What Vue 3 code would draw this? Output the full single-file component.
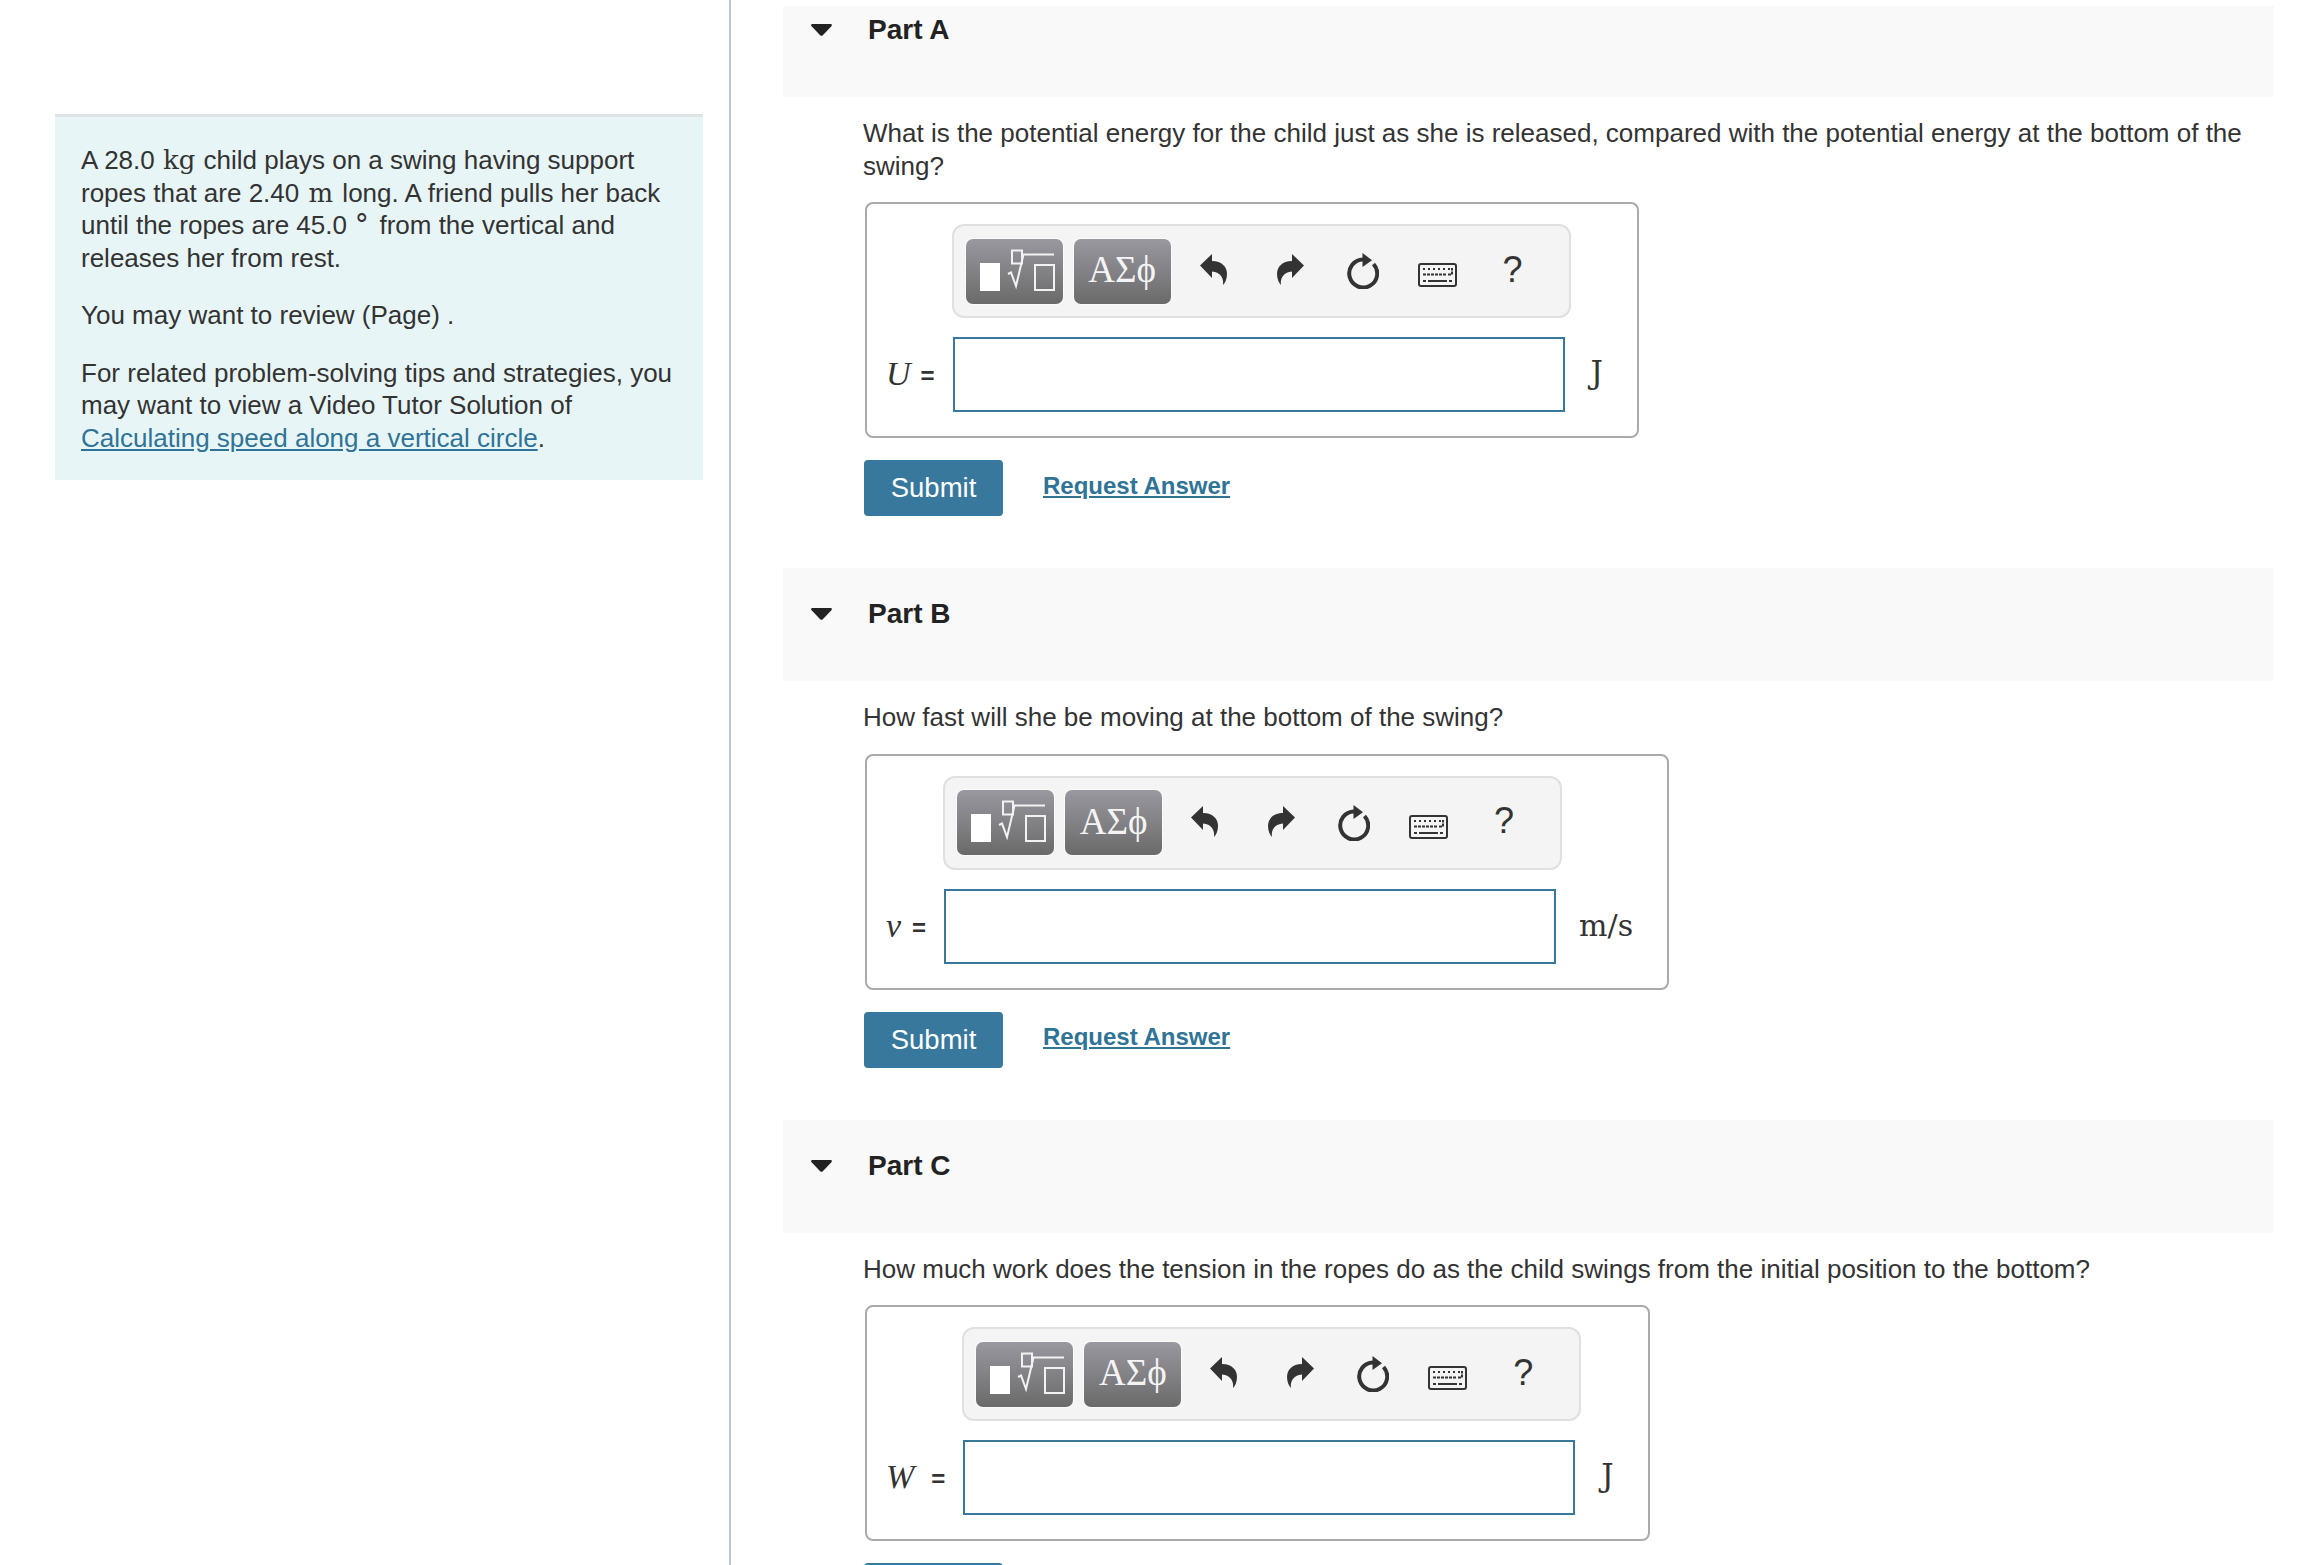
<template>
  <div class="page">
    <aside class="side">
      <div class="intro">
        <p>
          A 28.0 <span class="unit-math">kg</span> child plays on a swing having support
          ropes that are 2.40 <span class="unit-math unit-math--wide">m</span> long. A friend pulls her back
          until the ropes are 45.0 <sup class="deg">∘</sup> from the vertical and
          releases her from rest.
        </p>
        <p>You may want to review (Page) .</p>
        <p>
          For related problem-solving tips and strategies, you may want to view a Video Tutor Solution of
          <a class="link" href="#">Calculating speed along a vertical circle</a>.
        </p>
      </div>
    </aside>

    <main class="main">
      <section v-for="part in parts" :key="part.name" class="part">
        <header class="part-head" :class="{ 'part-head--first': part.name === 'Part A' }">
          <svg class="caret" viewBox="0 0 21 12" width="21" height="12">
            <path d="M1.5 0H19.5C20.8 0 21.3 1.2 20.4 2.2L11.6 11.4C11 12 10 12 9.4 11.4L.6 2.2C-.3 1.2.2 0 1.5 0Z" fill="#222" />
          </svg>
          <h2 class="part-title">{{ part.name }}</h2>
        </header>

        <p class="question">{{ part.question }}</p>

        <div class="answer-box">
          <div class="toolbar">
            <button class="tool-btn" type="button">
              <svg viewBox="0 0 97 65" width="97" height="65">
                <rect x="14" y="24" width="20" height="28" fill="#fff" />
                <rect x="46" y="11.5" width="10" height="13" fill="none" stroke="#f2f2f2" stroke-width="2" />
                <path d="M42 35L45 33.5L50 47L57.5 15.5H88" fill="none" stroke="#f2f2f2" stroke-width="2" />
                <rect x="69" y="26" width="19" height="25" fill="none" stroke="#f2f2f2" stroke-width="2" />
              </svg>
            </button>
            <button class="tool-btn tool-btn--greek" type="button">ΑΣϕ</button>

            <svg class="icon icon--undo" viewBox="0 0 27 31" width="27" height="31">
              <path d="M0 11.5L12 0V7C22 7 27 13 27 20C27 25 25 29 23 31C24 25 21 18 12 17.5V24Z" fill="#333" />
            </svg>
            <svg class="icon icon--redo" viewBox="0 0 27 31" width="27" height="31">
              <path d="M27 11.5L15 0V7C5 7 0 13 0 20C0 25 2 29 4 31C3 25 6 18 15 17.5V24Z" fill="#333" />
            </svg>
            <svg class="icon icon--reset" viewBox="0 0 32 36" width="32" height="36">
              <path d="M16 6.5A14 14 0 1 0 26.5 11" fill="none" stroke="#333" stroke-width="4" />
              <path d="M15.5 0L25 7.3L15.5 14Z" fill="#333" />
            </svg>
            <svg class="icon icon--keys" viewBox="0 0 39 24" width="39" height="24">
              <rect x="1" y="1" width="37" height="22" rx="2" fill="#f4f4f4" stroke="#333" stroke-width="2" />
              <path d="M5 6H8M10 6H13M15 6H18M20 6H23M25 6H28M30 6H32" stroke="#333" stroke-width="2" stroke-dasharray="2 1" />
              <path d="M5 11.5H28M30 11.5H34V5" fill="none" stroke="#333" stroke-width="2" stroke-dasharray="3 1" />
              <path d="M5 18H8M10 18H29M31 18H34" stroke="#333" stroke-width="2" />
            </svg>
            <span class="help">?</span>
          </div>

          <label class="var-label" :style="{ gap: part.labelGap + 'px' }"><i class="var-name">{{ part.variable }}</i><span class="equals">=</span></label>
          <input class="answer-input" type="text" />
          <span class="answer-unit" :class="{ 'answer-unit--joule': part.unit === 'J' }">{{ part.unit }}</span>
        </div>

        <div class="actions">
          <button class="submit" type="button">Submit</button>
          <a class="request" href="#">Request Answer</a>
        </div>
      </section>
    </main>
  </div>
</template>

<script setup>
const parts = [
  {
    name: 'Part A',
    question: 'What is the potential energy for the child just as she is released, compared with the potential energy at the bottom of the swing?',
    variable: 'U',
    labelGap: 10,
    unit: 'J'
  },
  {
    name: 'Part B',
    question: 'How fast will she be moving at the bottom of the swing?',
    variable: 'v',
    labelGap: 11,
    unit: 'm/s'
  },
  {
    name: 'Part C',
    question: 'How much work does the tension in the ropes do as the child swings from the initial position to the bottom?',
    variable: 'W',
    labelGap: 17,
    unit: 'J'
  }
]
</script>

<style>
html,
body {
  margin: 0;
  background: #fff;
}
</style>

<style scoped>
.page {
  display: flex;
  height: 1565px;
  overflow: hidden;
  font-family: "Liberation Sans", Arial, sans-serif;
  font-size: 26px;
  line-height: 32.5px;
  color: #333;
}

/* left column */
.side {
  box-sizing: border-box;
  width: 731px;
  flex: none;
  padding: 114px 26px 0 55px;
  border-right: 2px solid #b8c6dc;
}

.intro {
  box-sizing: border-box;
  height: 366px;
  padding: 27px 26px 0;
  background: #e8f5f6;
  border-top: 3px solid #dfe3e3;
}

.intro p {
  margin: 0 0 25px;
}

.unit-math {
  margin: 0 1px;
  font-family: "DejaVu Serif", serif;
  font-size: 26px;
  line-height: 0;
}

.unit-math--wide {
  margin: 0 2px;
}

.deg {
  margin: 0 1px 0 -1px;
  font-size: 28px;
  line-height: 0;
  vertical-align: 9px;
}

.link {
  color: #2f7396;
}

/* right column */
.main {
  flex: 1;
  padding: 6px 35px 0 52px;
}

.part {
  margin-bottom: 52px;
}

.part-head {
  box-sizing: border-box;
  display: flex;
  align-items: flex-start;
  height: 113px;
  padding: 30px 28px 0;
  background: #f9f9f9;
}

.part-head--first {
  height: 91px;
  padding-top: 8px;
}

.caret {
  flex: none;
  margin: 10px 36px 0 0;
}

.part-title {
  margin: 0;
  font-size: 28px;
  line-height: 32px;
  font-weight: 700;
  color: #222;
}

.question {
  margin: 20px 0 20px 80px;
}

.answer-box {
  box-sizing: border-box;
  display: grid;
  grid-template-columns: auto 612px auto;
  row-gap: 19px;
  align-items: center;
  width: fit-content;
  margin-left: 82px;
  padding: 20px 34px 24px 19px;
  border: 2px solid #aaa;
  border-radius: 8px;
}

.toolbar {
  box-sizing: border-box;
  grid-column: 2;
  grid-row: 1;
  display: flex;
  align-items: center;
  width: 619px;
  height: 94px;
  margin-left: -1px;
  padding: 0 12px;
  background: #f4f4f4;
  border: 2px solid #e0e0e0;
  border-radius: 12px;
}

.tool-btn {
  width: 97px;
  height: 65px;
  flex: none;
  padding: 0;
  border: none;
  border-radius: 7px;
  background: linear-gradient(#9a98a0, #6a6a6a);
  box-shadow: 0 0 0 1px #fbfbfb;
  color: #f4f4f4;
}

.tool-btn svg {
  display: block;
}

.tool-btn--greek {
  margin-left: 11px;
  font-family: "Liberation Serif", serif;
  font-size: 37px;
  line-height: 60px;
  padding-bottom: 2px;
}

.icon {
  flex: none;
}

.icon--undo {
  margin: 0 0 3px 29px;
}

.icon--redo {
  margin: 0 0 3px 50px;
}

.icon--reset {
  margin: 0 0 0 43px;
}

.icon--keys {
  margin: 8px 0 0 39px;
}

.help {
  margin: 0 0 3px 46px;
  font-size: 36px;
  line-height: 36px;
  color: #333;
}

.var-label {
  grid-column: 1;
  grid-row: 2;
  display: flex;
  align-items: center;
  margin-right: 18px;
}

.var-name {
  font-family: "Liberation Serif", serif;
  font-size: 34px;
}

.equals {
  font-size: 24px;
  font-weight: 700;
  padding-top: 4px;
}

.answer-input {
  grid-column: 2;
  grid-row: 2;
  box-sizing: border-box;
  display: block;
  width: 612px;
  height: 75px;
  border: 2px solid #38789c;
  outline: none;
  background: #fff;
}

.answer-unit {
  grid-column: 3;
  grid-row: 2;
  margin-left: 23px;
  font-family: "DejaVu Serif", serif;
  font-size: 30px;
}

.answer-unit--joule {
  margin: 0 0 4px 26px;
  font-size: 31px;
}

.actions {
  display: flex;
  align-items: center;
  gap: 40px;
  margin: 22px 0 0 81px;
}

.submit {
  width: 139px;
  height: 56px;
  padding: 0;
  border: none;
  border-radius: 4px;
  background: #38789c;
  color: #fff;
  font-family: inherit;
  font-size: 27.5px;
}

.request {
  margin-bottom: 4px;
  font-size: 24px;
  font-weight: 700;
  color: #2f7396;
}
</style>
